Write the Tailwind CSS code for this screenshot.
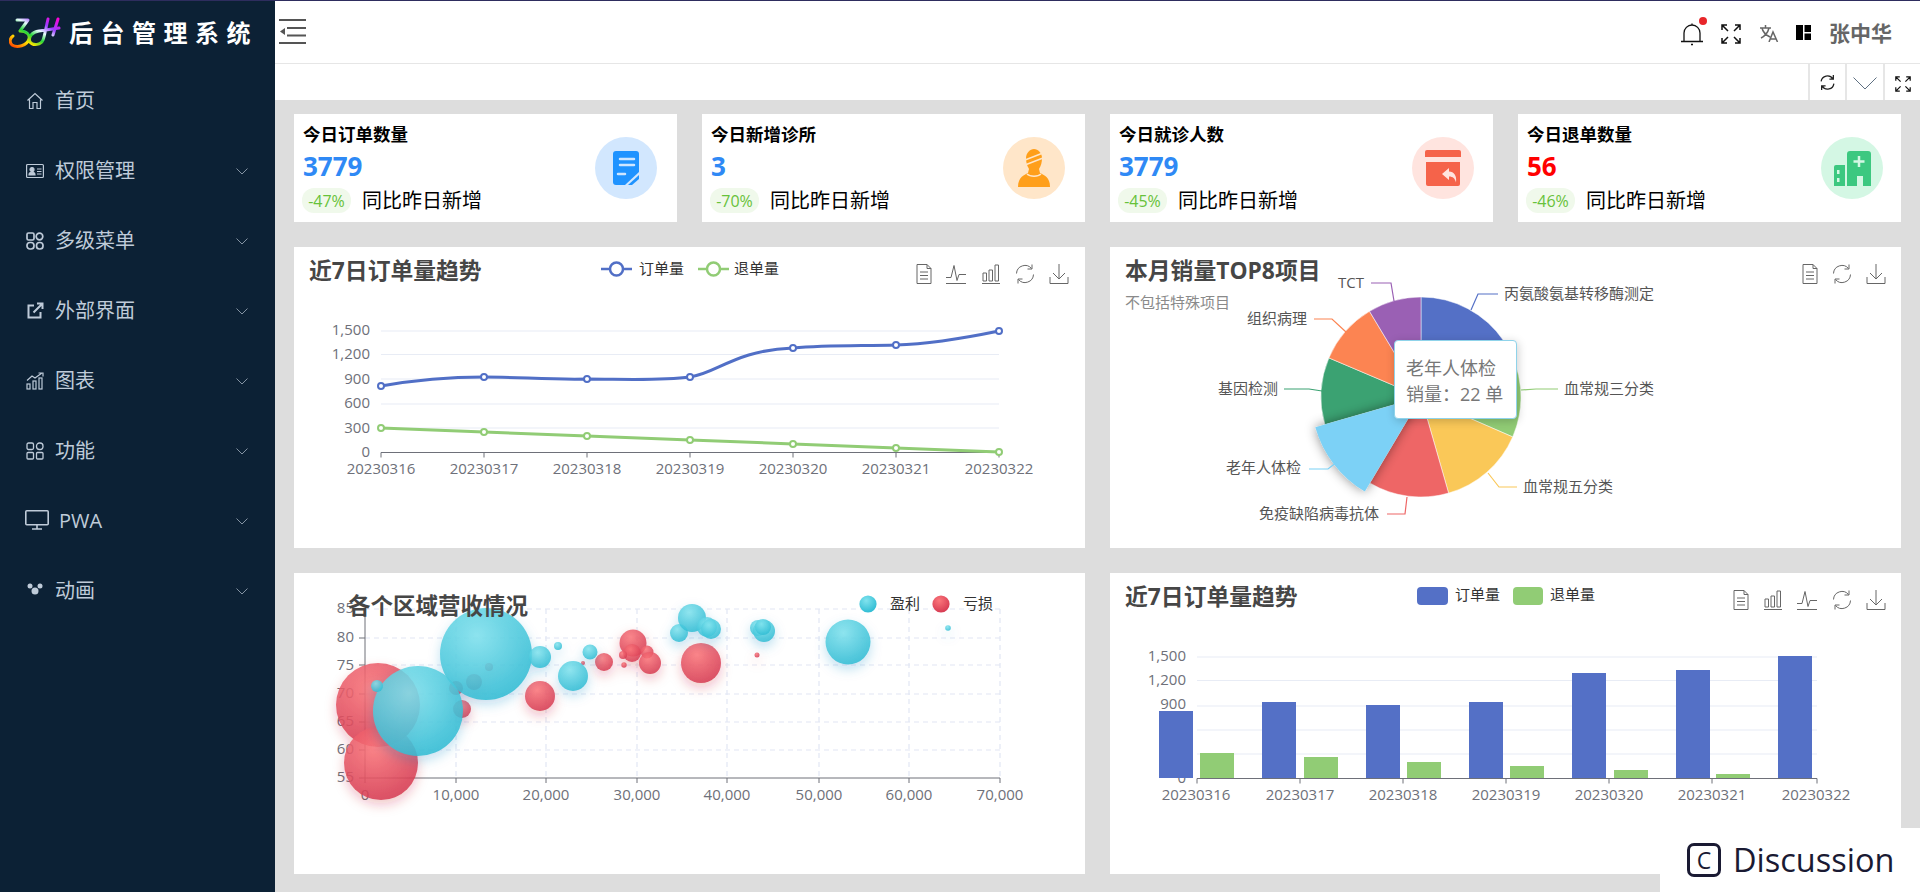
<!DOCTYPE html>
<html lang="zh-CN">
<head>
<meta charset="utf-8">
<title>后台管理系统</title>
<script src="https://cdn.jsdelivr.net/npm/@tailwindcss/browser@4"></script>
</head>
<body class="font-['Open_Sans','Noto_Sans_CJK_SC',sans-serif] overflow-hidden">
<div class="relative w-[1920px] h-[892px] overflow-hidden bg-[#dddddd]">
    <div class="h-px bg-[#2e2d5e]"></div>
    <div class="flex h-[891px]">

        <!-- sidebar -->
        <aside class="w-[275px] shrink-0 bg-[#0c2135] text-[#bfcbd9]">
            <div class="h-[64px] flex items-center pl-[9px]">
                <svg width="52" height="32" viewBox="0 0 52 32" fill="none" class="-mt-[1px]">
                    <defs>
                        <linearGradient id="rainbow" x1="0" y1="1" x2="1" y2="0">
                            <stop offset="0" stop-color="#ff3b00"/>
                            <stop offset=".25" stop-color="#ffe600"/>
                            <stop offset=".42" stop-color="#27d63a"/>
                            <stop offset=".58" stop-color="#e8fbff"/>
                            <stop offset=".75" stop-color="#9b3dff"/>
                            <stop offset="1" stop-color="#ff00d8"/>
                        </linearGradient>
                    </defs>
                    <path d="M8 3H19L11 14C18 14 21 18 20 22C18 29 8 31 3 28C0 25 1 21 4 19M39 2C37 10 36 18 34 23C32 28 24 29 21 25C19 20 23 15 30 14L50 11M49 2L44 18" stroke="url(#rainbow)" stroke-width="3" stroke-linecap="round" stroke-linejoin="round"/>
                </svg>
                <span class="ml-[8px] text-[24px] leading-none font-bold text-white tracking-[7.5px] whitespace-nowrap">后台管理系统</span>
            </div>
            <nav class="text-[20px] pt-px">
                <a class="h-[70px] flex items-center pl-[26px]">
                    <svg class="w-[18px] h-[18px] mr-[11px]" viewBox="0 0 18 18" fill="none" stroke="currentColor" stroke-width="1.2"><path d="M1.5 8.5L9 1.5l7.500 7M3.500 7.500V16.500h3.500V10.500h4V16.500h3.500V7.500"/></svg>
                    <span>首页</span>
                </a>
                <a class="h-[70px] flex items-center pl-[26px]">
                    <svg class="w-[18px] h-[18px] mr-[11px]" viewBox="0 0 18 18" fill="none" stroke="currentColor" stroke-width="1.200"><rect x=".6" y="2.500" width="16.800" height="13" rx="1"/><circle cx="6" cy="7.500" r="2" fill="currentColor"/><path d="M3 13c0-4 6-4 6 0z" fill="currentColor"/><path d="M11 7h4.500M11 9.500h4.500M11 12h4.500"/></svg>
                    <span>权限管理</span>
                    <svg class="ml-auto mr-[27px] w-[12px] h-[7px]" viewBox="0 0 12 7" fill="none" stroke="#8493a3"><path d="M.5.5l5.500 5.500 5.500-5.500"/></svg>
                </a>
                <a class="h-[70px] flex items-center pl-[26px]">
                    <svg class="w-[18px] h-[18px] mr-[11px]" viewBox="0 0 18 18" fill="none" stroke="currentColor" stroke-width="1.700"><rect x="1" y="1" width="7" height="7" rx="1.500"/><circle cx="13.500" cy="4.500" r="3.300"/><rect x="1" y="10.500" width="7" height="6.500" rx="3"/><rect x="10.500" y="10.500" width="6.500" height="6.500" rx="3"/></svg>
                    <span>多级菜单</span>
                    <svg class="ml-auto mr-[27px] w-[12px] h-[7px]" viewBox="0 0 12 7" fill="none" stroke="#8493a3"><path d="M.5.5l5.500 5.500 5.500-5.500"/></svg>
                </a>
                <a class="h-[70px] flex items-center pl-[26px]">
                    <svg class="w-[18px] h-[18px] mr-[11px]" viewBox="0 0 18 18" fill="none" stroke="currentColor" stroke-width="2"><path d="M8 3.500H2.500v12h12V10M7.500 10.500L16 2M11 1.500h5.500V7"/></svg>
                    <span>外部界面</span>
                    <svg class="ml-auto mr-[27px] w-[12px] h-[7px]" viewBox="0 0 12 7" fill="none" stroke="#8493a3"><path d="M.5.5l5.500 5.500 5.500-5.500"/></svg>
                </a>
                <a class="h-[70px] flex items-center pl-[26px]">
                    <svg class="w-[18px] h-[18px] mr-[11px]" viewBox="0 0 18 18" fill="none" stroke="currentColor" stroke-width="1.200"><rect x="1" y="12" width="3" height="5"/><rect x="7" y="9" width="3" height="8"/><rect x="13" y="6" width="3" height="11"/><path d="M1 8.500L6 4l3 2 7-5M12.500 1H17v3.500"/></svg>
                    <span>图表</span>
                    <svg class="ml-auto mr-[27px] w-[12px] h-[7px]" viewBox="0 0 12 7" fill="none" stroke="#8493a3"><path d="M.5.5l5.500 5.500 5.500-5.500"/></svg>
                </a>
                <a class="h-[70px] flex items-center pl-[26px]">
                    <svg class="w-[18px] h-[18px] mr-[11px]" viewBox="0 0 18 18" fill="none" stroke="currentColor" stroke-width="1.300"><rect x="1" y="1" width="6.500" height="6.500" rx="1.500"/><rect x="10.500" y="1" width="6.500" height="6.500" rx="3"/><rect x="1" y="10.500" width="6.500" height="6.500" rx="1"/><rect x="10.500" y="10.500" width="6.500" height="6.500" rx="1"/></svg>
                    <span>功能</span>
                    <svg class="ml-auto mr-[27px] w-[12px] h-[7px]" viewBox="0 0 12 7" fill="none" stroke="#8493a3"><path d="M.5.5l5.500 5.500 5.500-5.500"/></svg>
                </a>
                <a class="h-[70px] flex items-center pl-[25px]">
                    <svg class="w-[24px] h-[20px] mr-[10px] -mt-[3px]" viewBox="0 0 24 20" fill="none" stroke="currentColor" stroke-width="1.600"><rect x=".8" y=".8" width="22.400" height="14" rx="1"/><path d="M12 15v4M7 19h10"/></svg>
                    <span>PWA</span>
                    <svg class="ml-auto mr-[27px] w-[12px] h-[7px]" viewBox="0 0 12 7" fill="none" stroke="#8493a3"><path d="M.5.5l5.500 5.500 5.500-5.500"/></svg>
                </a>
                <a class="h-[70px] flex items-center pl-[26px]">
                    <svg class="w-[18px] h-[18px] mr-[11px] -mt-[2px]" viewBox="0 0 18 18" fill="currentColor"><circle cx="4" cy="5" r="2.500"/><circle cx="14" cy="5" r="2.500"/><circle cx="9" cy="10" r="3.500"/></svg>
                    <span>动画</span>
                    <svg class="ml-auto mr-[27px] w-[12px] h-[7px]" viewBox="0 0 12 7" fill="none" stroke="#8493a3"><path d="M.5.5l5.500 5.500 5.500-5.500"/></svg>
                </a>
            </nav>
        </aside>

        <div class="flex-1 flex flex-col min-w-0">
            <!-- header -->
            <header class="h-[63px] shrink-0 bg-white border-b border-[#e6e6e6] flex items-center">
                <svg class="ml-[4px] w-[27px] h-[25px] -mt-[1px]" viewBox="0 0 27 25" fill="none" stroke="#555" stroke-width="2"><path d="M0 1h27M8 9h19M8 16.500h19M0 24h27"/><path d="M1 12.500l5-3.500v7z" fill="#555" stroke="none"/></svg>
                <div class="ml-auto flex items-center mt-[3px]">
                    <div class="relative w-[24px] h-[24px]">
                        <svg class="w-[24px] h-[24px]" viewBox="0 0 24 24" fill="none" stroke="#111" stroke-width="1.300"><path d="M4 19.500V11a8 8 0 0 1 16 0v8.500M1 19.500h22M12 1.500V3M11 22.500h2"/></svg>
                        <span class="absolute -top-[5px] right-[-3px] w-[8px] h-[8px] rounded-full bg-[#e8262a]"></span>
                    </div>
                    <svg class="ml-[17px] w-[20px] h-[20px]" viewBox="0 0 20 20" fill="none" stroke="#111" stroke-width="1.500"><path d="M1 6V1h5M1 1l6 6M14 1h5v5M19 1l-6 6M1 14v5h5M1 19l6-6M14 19h5v-5M19 19l-6-6"/></svg>
                    <svg class="ml-[19px] w-[19px] h-[17px]" viewBox="0 0 19 17" fill="none" stroke="#666" stroke-width="1.500"><path d="M0 3h11M5.500 0v3M2 3c1 5 4 7 8 9M9 3c-1 4-4 8-8 10M9 17l4-10 4.500 10M10.500 14h5.500"/></svg>
                    <svg class="ml-[17px] w-[15px] h-[15px] -mt-[3px]" viewBox="0 0 15 15" fill="#000"><rect width="7" height="15"/><rect x="8.500" width="6.500" height="7"/><rect x="8.500" y="8.500" width="6.500" height="6.500"/></svg>
                    <span class="ml-[18px] mr-[28px] text-[21px] font-bold text-[#666]">张中华</span>
                </div>
            </header>

            <!-- tag bar -->
            <div class="h-[36px] shrink-0 bg-white flex justify-end">
                <div class="w-[37px] border-l-2 border-[#e6e6e6] flex items-center justify-center">
                    <svg class="w-[17px] h-[17px]" viewBox="0 0 16 16" fill="none" stroke="#222" stroke-width="1.200"><path d="M2 7a6 6 0 0 1 11-2.500M14 9a6 6 0 0 1-11 2.500M13.500 1v3.800H9.800M2.500 15v-3.800h3.700"/></svg>
                </div>
                <div class="w-[38px] border-l-2 border-[#e6e6e6] flex items-center justify-center">
                    <svg class="w-[24px] h-[13px] mt-[3px]" viewBox="0 0 24 13" fill="none" stroke="#5f7082"><path d="M.5.5l11.500 11.500L23.500.5"/></svg>
                </div>
                <div class="w-[37px] border-l-2 border-[#e6e6e6] flex items-center justify-center">
                    <svg class="w-[16px] h-[16px] mt-[3px]" viewBox="0 0 20 20" fill="none" stroke="#111" stroke-width="1.500"><path d="M1 6V1h5M1 1l6 6M14 1h5v5M19 1l-6 6M1 14v5h5M1 19l6-6M14 19h5v-5M19 19l-6-6"/></svg>
                </div>
            </div>

            <!-- content -->
            <main class="flex-1 pl-[19px] pr-[19px] pt-[14px]">
                <section class="grid grid-cols-4 gap-[25px]">
                    <div class="h-[108px] bg-white flex items-center justify-between pl-[9px] pr-[20px]">
                        <div>
                            <div class="text-[17.500px] leading-[22px] font-bold text-black">今日订单数量</div>
                            <div class="mt-[4px] text-[26px] leading-[34px] font-bold text-[#2f89f5]">3779</div>
                            <div class="mt-[5px] flex items-center -ml-px">
                                <span class="w-[49px] h-[25px] rounded-[12px] bg-[#f0f9eb] text-[#67c23a] text-[16px] flex items-center justify-center">-47%</span>
                                <span class="ml-[11px] text-[20px] leading-[25px] text-black">同比昨日新增</span>
                            </div>
                        </div>
                        <div class="w-[62px] h-[62px] rounded-full bg-[#d2e7fe] flex items-center justify-center">
                            <svg class="w-[26px] h-[34px]" viewBox="0 0 26 34"><path d="M3 0h20a3 3 0 0 1 3 3v18L12 34H3a3 3 0 0 1-3-3V3a3 3 0 0 1 3-3z" fill="#1f93ff"/><path d="M26 24v4l-7 6h-4z" fill="#1f93ff"/><path d="M7 8h14M7 14h14M5 23h7" stroke="#cfe6ff" stroke-width="2.500" stroke-linecap="round"/></svg>
                        </div>
                    </div>
                    <div class="h-[108px] bg-white flex items-center justify-between pl-[9px] pr-[20px]">
                        <div>
                            <div class="text-[17.500px] leading-[22px] font-bold text-black">今日新增诊所</div>
                            <div class="mt-[4px] text-[26px] leading-[34px] font-bold text-[#2f89f5]">3</div>
                            <div class="mt-[5px] flex items-center -ml-px">
                                <span class="w-[49px] h-[25px] rounded-[12px] bg-[#f0f9eb] text-[#67c23a] text-[16px] flex items-center justify-center">-70%</span>
                                <span class="ml-[11px] text-[20px] leading-[25px] text-black">同比昨日新增</span>
                            </div>
                        </div>
                        <div class="w-[62px] h-[62px] rounded-full bg-[#ffe6c9] flex items-center justify-center">
                            <svg class="w-[32px] h-[38px]" viewBox="0 0 32 38" fill="#ff9f1a"><path d="M8 9c0-5 4-9 8-9s8 4 8 9c0 4-1 8-3 11h-10c-2-3-3-7-3-11z"/><path d="M11 20h10l1 4c4 2 10 4 10 14H0c0-10 6-12 10-14z"/><path d="M7 11l18-7M7 16l18-7M9 25c3 3 11 3 14 0" fill="none" stroke="#ffe6c9" stroke-width="1.500"/></svg>
                        </div>
                    </div>
                    <div class="h-[108px] bg-white flex items-center justify-between pl-[9px] pr-[19px]">
                        <div>
                            <div class="text-[17.500px] leading-[22px] font-bold text-black">今日就诊人数</div>
                            <div class="mt-[4px] text-[26px] leading-[34px] font-bold text-[#2f89f5]">3779</div>
                            <div class="mt-[5px] flex items-center -ml-px">
                                <span class="w-[49px] h-[25px] rounded-[12px] bg-[#f0f9eb] text-[#67c23a] text-[16px] flex items-center justify-center">-45%</span>
                                <span class="ml-[11px] text-[20px] leading-[25px] text-black">同比昨日新增</span>
                            </div>
                        </div>
                        <div class="w-[62px] h-[62px] rounded-full bg-[#ffe4df] flex items-center justify-center">
                            <svg class="w-[36px] h-[36px]" viewBox="0 0 36 36"><path d="M2 0h32a2 2 0 0 1 2 2v5H0V2a2 2 0 0 1 2-2z" fill="#f5634a"/><path d="M1 12h34v22a2 2 0 0 1-2 2H3a2 2 0 0 1-2-2z" fill="#f5634a"/><path d="M24 18l-7 6 7 6v-3.500c4 0 6 2 7 6 1-7-2-11-7-11z" fill="#ffe4df"/></svg>
                        </div>
                    </div>
                    <div class="h-[108px] bg-white flex items-center justify-between pl-[9px] pr-[18px]">
                        <div>
                            <div class="text-[17.500px] leading-[22px] font-bold text-black">今日退单数量</div>
                            <div class="mt-[4px] text-[26px] leading-[34px] font-bold text-[#ff0000]">56</div>
                            <div class="mt-[5px] flex items-center -ml-px">
                                <span class="w-[49px] h-[25px] rounded-[12px] bg-[#f0f9eb] text-[#67c23a] text-[16px] flex items-center justify-center">-46%</span>
                                <span class="ml-[11px] text-[20px] leading-[25px] text-black">同比昨日新增</span>
                            </div>
                        </div>
                        <div class="w-[62px] h-[62px] rounded-full bg-[#d4f7e4] flex items-center justify-center">
                            <svg class="w-[37px] h-[35px]" viewBox="0 0 37 35" fill="#3cc880"><path d="M0 16a2 2 0 0 1 2-2h9v21H0z"/><path d="M13 3a3 3 0 0 1 3-3h18a3 3 0 0 1 3 3v32h-8V25h-6v10H13z"/><path d="M25 5v11M19.500 10.500h11" stroke="#d4f7e4" stroke-width="2.500"/><path d="M3 19h2.500v4H3zM3 27h2.500v4H3z" fill="#d4f7e4"/></svg>
                        </div>
                    </div>
                </section>

                <svg width="0" height="0" class="absolute">
                    <defs>
                        <symbol id="t-doc" viewBox="0 0 20 20" fill="none" stroke="#666" stroke-width="1"><path d="M3 .5h10l4 4v15H3zM13 .5v4h4M6 8h8M6 11.500h8M6 15h8"/></symbol>
                        <symbol id="t-line" viewBox="0 0 20 20" fill="none" stroke="#666" stroke-width="1"><path d="M0 19.500h20M0 13.500h5l3-12 3 15 2-6h7"/></symbol>
                        <symbol id="t-bar" viewBox="0 0 20 20" fill="none" stroke="#666" stroke-width="1"><path d="M1 19.500h18M2 9h3.500v8H2zM8 6h3.500v11H8zM14 1h3.500v16H14z"/></symbol>
                        <symbol id="t-restore" viewBox="0 0 20 20" fill="none" stroke="#666" stroke-width="1"><path d="M1.500 9.500a8.500 8.500 0 0 1 15-5M18.500 10.500a8.500 8.500 0 0 1-15 5M17 .5v4.500h-4.500M3 19.500v-4.500h4.500"/></symbol>
                        <symbol id="t-save" viewBox="0 0 20 20" fill="none" stroke="#666" stroke-width="1"><path d="M1 13v6.500h18V13M10 0v15M4 9l6 6 6-6"/></symbol>
                        <radialGradient id="cyan" cx=".4" cy=".3" r=".75">
                            <stop offset="0" stop-color="#81e3ee"/>
                            <stop offset="1" stop-color="#2bbad2"/>
                        </radialGradient>
                        <radialGradient id="red" cx=".4" cy=".3" r=".75">
                            <stop offset="0" stop-color="#fb767b"/>
                            <stop offset="1" stop-color="#d4374f"/>
                        </radialGradient>
                        <filter id="sc" x="-40%" y="-40%" width="180%" height="180%"><feDropShadow dx="0" dy="5" stdDeviation="6" flood-color="#1989c8" flood-opacity=".3"/></filter>
                        <filter id="sr" x="-40%" y="-40%" width="180%" height="180%"><feDropShadow dx="0" dy="5" stdDeviation="6" flood-color="#c81932" flood-opacity=".3"/></filter>
                        <filter id="sp" x="-30%" y="-30%" width="160%" height="160%"><feDropShadow dx="0" dy="0" stdDeviation="6" flood-color="#000" flood-opacity=".45"/></filter>
                    </defs>
                </svg>

                <section class="mt-[25px] grid grid-cols-2 gap-[25px]">
                    <!-- line chart -->
                    <div class="h-[301px] bg-white">
                        <svg class="block w-full h-full" viewBox="294 247 791 301" text-anchor="middle" dominant-baseline="central">
                            <text x="309" y="270" text-anchor="start" font-size="22.800" font-weight="700" fill="#464646">近7日订单量趋势</text>
                            <path d="M601 269h31" stroke="#516fc6" stroke-width="2.500"/><circle cx="616.500" cy="269" r="6.500" fill="#fff" stroke="#516fc6" stroke-width="2.500"/>
                            <text x="639" y="268" text-anchor="start" font-size="15" fill="#333">订单量</text>
                            <path d="M698 269h31" stroke="#91cc75" stroke-width="2.500"/><circle cx="713.500" cy="269" r="6.500" fill="#fff" stroke="#91cc75" stroke-width="2.500"/>
                            <text x="734" y="268" text-anchor="start" font-size="15" fill="#333">退单量</text>
                            <use href="#t-doc" x="914" y="264" width="20" height="20"/>
                            <use href="#t-line" x="946" y="264" width="20" height="20"/>
                            <use href="#t-bar" x="981" y="264" width="20" height="20"/>
                            <use href="#t-restore" x="1015" y="264" width="20" height="20"/>
                            <use href="#t-save" x="1049" y="264" width="20" height="20"/>
                            <path d="M381 331H999M381 354.500H999M381 379H999M381 404H999M381 428H999" stroke="#e8ecf5" stroke-width="1.200"/>
                            <path d="M381 452.500H999M381 452.500v5M484 452.500v5M587 452.500v5M690 452.500v5M793 452.500v5M896 452.500v5M999 452.500v5" stroke="#6e7079" stroke-width="1"/>
                            <g font-size="15" fill="#6e7079" text-anchor="end">
                                <text x="370" y="329">1,500</text><text x="370" y="353">1,200</text><text x="370" y="378">900</text><text x="370" y="402">600</text><text x="370" y="427">300</text><text x="370" y="451">0</text>
                            </g>
                            <g font-size="15" fill="#6e7079">
                                <text x="381" y="468">20230316</text><text x="484" y="468">20230317</text><text x="587" y="468">20230318</text><text x="690" y="468">20230319</text><text x="793" y="468">20230320</text><text x="896" y="468">20230321</text><text x="999" y="468">20230322</text>
                            </g>
                            <path d="M381 386C415 380 450 377 484 377C518 377 553 380 587 379C621 379 660 381 690 377C716 374 735 350 793 348C827 345 862 346 896 345C930 344 965 338 999 331" fill="none" stroke="#516fc6" stroke-width="3"/>
                            <path d="M381 428L484 432L587 436L690 440L793 444L896 448L999 452" fill="none" stroke="#91cc75" stroke-width="3"/>
                            <g fill="#fff" stroke="#516fc6" stroke-width="2"><circle cx="381" cy="386" r="3"/><circle cx="484" cy="377" r="3"/><circle cx="587" cy="379" r="3"/><circle cx="690" cy="377" r="3"/><circle cx="793" cy="348" r="3"/><circle cx="896" cy="345" r="3"/><circle cx="999" cy="331" r="3"/></g>
                            <g fill="#fff" stroke="#91cc75" stroke-width="2"><circle cx="381" cy="428" r="3"/><circle cx="484" cy="432" r="3"/><circle cx="587" cy="436" r="3"/><circle cx="690" cy="440" r="3"/><circle cx="793" cy="444" r="3"/><circle cx="896" cy="448" r="3"/><circle cx="999" cy="452" r="3"/></g>
                        </svg>
                    </div>

                    <!-- pie chart -->
                    <div class="relative h-[301px] bg-white">
                        <svg class="block w-full h-full" viewBox="1110 247 791 301" text-anchor="start" dominant-baseline="central">
                            <text x="1125" y="270" font-size="22.800" font-weight="700" fill="#464646">本月销量TOP8项目</text>
                            <text x="1125" y="302" font-size="15" fill="#8a8a8a">不包括特殊项目</text>
                            <use href="#t-doc" x="1800" y="264" width="20" height="20"/>
                            <use href="#t-restore" x="1832" y="264" width="20" height="20"/>
                            <use href="#t-save" x="1866" y="264" width="20" height="20"/>
                            <g stroke="#fff" stroke-width=".5">
                                <path d="M1421 397V297A100 100 0 0 1 1503.900 341.100Z" fill="#5470c6"/>
                                <path d="M1421 397L1503.900 341.100A100 100 0 0 1 1512.700 436.900Z" fill="#91cc75"/>
                                <path d="M1421 397L1512.700 436.900A100 100 0 0 1 1448.600 493.100Z" fill="#fac858"/>
                                <path d="M1421 397L1448.600 493.100A100 100 0 0 1 1369.900 483Z" fill="#ee6666"/>
                                <path d="M1421 397L1324.900 424.600A100 100 0 0 1 1328.900 357.900Z" fill="#3ba272"/>
                                <path d="M1421 397L1328.900 357.900A100 100 0 0 1 1369.500 311.300Z" fill="#fc8452"/>
                                <path d="M1421 397L1369.500 311.300A100 100 0 0 1 1421 297Z" fill="#9a60b4"/>
                            </g>
                            <path d="M1421 397L1364.800 491.600A110 110 0 0 1 1315.300 427.300Z" fill="#7bd1f6" filter="url(#sp)"/>
                            <g fill="none" stroke-width="1.200">
                                <path d="M1471 310L1478 294H1498" stroke="#5470c6"/>
                                <path d="M1371 283H1391L1394 301" stroke="#9a60b4"/>
                                <path d="M1314 319H1332L1346 332" stroke="#fc8452"/>
                                <path d="M1284 389H1309L1322 391" stroke="#3ba272"/>
                                <path d="M1558 389H1536L1521 390" stroke="#91cc75"/>
                                <path d="M1309 469H1328L1337 462" stroke="#7bd1f6"/>
                                <path d="M1387 514H1405L1407 497" stroke="#ee6666"/>
                                <path d="M1517 487H1499L1488 473" stroke="#fac858"/>
                            </g>
                            <g font-size="15" fill="#555">
                                <text x="1504" y="293">丙氨酸氨基转移酶测定</text>
                                <text x="1338" y="282">TCT</text>
                                <text x="1247" y="318">组织病理</text>
                                <text x="1218" y="388">基因检测</text>
                                <text x="1564" y="388">血常规三分类</text>
                                <text x="1226" y="467">老年人体检</text>
                                <text x="1259" y="513">免疫缺陷病毒抗体</text>
                                <text x="1523" y="486">血常规五分类</text>
                            </g>
                        </svg>
                        <div class="absolute left-[284px] top-[93px] w-[123px] h-[79px] bg-white border border-[#8fd3ea] rounded-[4px] shadow-[1px_2px_10px_rgba(0,0,0,0.2)] pl-[11px] pt-[14px] text-[18px] leading-[26px] text-[#777] whitespace-nowrap">
                            <div>老年人体检</div>
                            <div>销量：22 单</div>
                        </div>
                    </div>

                    <!-- bubble chart -->
                    <div class="h-[301px] bg-white">
                        <svg class="block w-full h-full" viewBox="294 573 791 301" text-anchor="middle" dominant-baseline="central">
                            <g stroke="#e2e6f3" stroke-width="1.200" stroke-dasharray="5 4">
                                <path d="M365 609H1000M365 638H1000M365 665H1000M365 694H1000M365 722H1000M365 750H1000"/>
                                <path d="M456 609V778M546 609V778M637 609V778M727 609V778M819 609V778M909 609V778M1000 609V778"/>
                            </g>
                            <path d="M365 609V778H1000M365 609h-6M365 638h-6M365 665h-6M365 694h-6M365 722h-6M365 750h-6M365 778h-6M365 778v5M456 778v5M546 778v5M637 778v5M727 778v5M819 778v5M909 778v5M1000 778v5" fill="none" stroke="#6e7079"/>
                            <g font-size="15" fill="#6e7079" text-anchor="end">
                                <text x="354" y="607">85</text><text x="354" y="636">80</text><text x="354" y="664">75</text><text x="354" y="692">70</text><text x="354" y="720">65</text><text x="354" y="748">60</text><text x="354" y="776">55</text>
                            </g>
                            <g font-size="15" fill="#6e7079">
                                <text x="365" y="794">0</text><text x="456" y="794">10,000</text><text x="546" y="794">20,000</text><text x="637" y="794">30,000</text><text x="727" y="794">40,000</text><text x="819" y="794">50,000</text><text x="909" y="794">60,000</text><text x="1000" y="794">70,000</text>
                            </g>
                            <g fill="url(#red)" filter="url(#sr)" fill-opacity=".85">
                                <circle cx="378" cy="705" r="42"/><circle cx="381" cy="763" r="37"/><circle cx="462" cy="709" r="9"/><circle cx="456" cy="688" r="7"/><circle cx="474" cy="682" r="8"/><circle cx="489" cy="667" r="4"/><circle cx="540" cy="696" r="15"/><circle cx="604" cy="662" r="9"/><circle cx="633" cy="643" r="13.500"/><circle cx="632" cy="653" r="9"/><circle cx="623" cy="655" r="4"/><circle cx="647" cy="652" r="6.500"/><circle cx="650" cy="663" r="11"/><circle cx="624" cy="665" r="2.700"/><circle cx="583" cy="663" r="2"/><circle cx="701" cy="663" r="20"/><circle cx="757" cy="655" r="2.500"/>
                            </g>
                            <g fill="url(#cyan)" filter="url(#sc)" fill-opacity=".85">
                                <circle cx="486" cy="654" r="46"/><circle cx="418" cy="711" r="45"/><circle cx="377" cy="686" r="6"/><circle cx="540" cy="657" r="11"/><circle cx="558" cy="646" r="4"/><circle cx="573" cy="676" r="15"/><circle cx="590" cy="652" r="7.500"/><circle cx="679" cy="633" r="9"/><circle cx="692" cy="618" r="14"/><circle cx="707" cy="627" r="10"/><circle cx="711" cy="629" r="10"/><circle cx="758" cy="628" r="8"/><circle cx="764" cy="631" r="11"/><circle cx="763" cy="627" r="8"/><circle cx="848" cy="642" r="22.500"/><circle cx="948" cy="628" r="2.800"/>
                            </g>
                            <text x="348" y="605" text-anchor="start" font-size="22.500" font-weight="700" fill="#464646">各个区域营收情况</text>
                            <circle cx="868" cy="604" r="8.600" fill="url(#cyan)"/>
                            <text x="890" y="603" text-anchor="start" font-size="15" fill="#333">盈利</text>
                            <circle cx="941" cy="604" r="8.600" fill="url(#red)"/>
                            <text x="963" y="603" text-anchor="start" font-size="15" fill="#333">亏损</text>
                        </svg>
                    </div>

                    <!-- bar chart -->
                    <div class="h-[301px] bg-white">
                        <svg class="block w-full h-full" viewBox="1110 573 791 301" text-anchor="middle" dominant-baseline="central">
                            <text x="1125" y="596" text-anchor="start" font-size="22.800" font-weight="700" fill="#464646">近7日订单量趋势</text>
                            <rect x="1417" y="587" width="31" height="18" rx="4" fill="#5470c6"/>
                            <text x="1455" y="594" text-anchor="start" font-size="15" fill="#333">订单量</text>
                            <rect x="1513" y="587" width="30" height="18" rx="4" fill="#91cc75"/>
                            <text x="1550" y="594" text-anchor="start" font-size="15" fill="#333">退单量</text>
                            <use href="#t-doc" x="1731" y="590" width="20" height="20"/>
                            <use href="#t-bar" x="1763" y="590" width="20" height="20"/>
                            <use href="#t-line" x="1797" y="590" width="20" height="20"/>
                            <use href="#t-restore" x="1832" y="590" width="20" height="20"/>
                            <use href="#t-save" x="1866" y="590" width="20" height="20"/>
                            <path d="M1197 657H1817M1197 680.500H1817M1197 706H1817M1197 730H1817M1197 754H1817" stroke="#e8ecf5" stroke-width="1.200"/>
                            <g font-size="15" fill="#6e7079" text-anchor="end">
                                <text x="1186" y="655">1,500</text><text x="1186" y="679">1,200</text><text x="1186" y="703">900</text><text x="1186" y="728">600</text><text x="1186" y="752">300</text><text x="1186" y="777">0</text>
                            </g>
                            <g fill="#5470c6">
                                <rect x="1159" y="711" width="34" height="67"/><rect x="1262" y="702" width="34" height="76"/><rect x="1366" y="705" width="34" height="73"/><rect x="1469" y="702" width="34" height="76"/><rect x="1572" y="673" width="34" height="105"/><rect x="1676" y="670" width="34" height="108"/><rect x="1778" y="656" width="34" height="122"/>
                            </g>
                            <g fill="#91cc75">
                                <rect x="1200" y="753" width="34" height="25"/><rect x="1304" y="757" width="34" height="21"/><rect x="1407" y="762" width="34" height="16"/><rect x="1510" y="766" width="34" height="12"/><rect x="1614" y="770" width="34" height="8"/><rect x="1716" y="774" width="34" height="4"/>
                            </g>
                            <path d="M1197 778.500H1817M1197 778.500v5M1300 778.500v5M1403 778.500v5M1506 778.500v5M1609 778.500v5M1712 778.500v5M1817 778.500v5" stroke="#6e7079" fill="none"/>
                            <g font-size="15" fill="#6e7079">
                                <text x="1196" y="794">20230316</text><text x="1300" y="794">20230317</text><text x="1403" y="794">20230318</text><text x="1506" y="794">20230319</text><text x="1609" y="794">20230320</text><text x="1712" y="794">20230321</text><text x="1816" y="794">20230322</text>
                            </g>
                        </svg>
                    </div>
                </section>
            </main>
        </div>
    </div>

    <!-- floating discussion widget -->
    <div class="absolute right-0 bottom-0 w-[260px] h-[64px] bg-white flex items-center pl-[27px]">
        <div class="w-[34px] h-[34px] border-[3px] border-[#1a1a33] rounded-[7px] flex items-center justify-center text-[23px] leading-none text-[#1a1a33]">C</div>
        <span class="ml-[12px] text-[32.500px] leading-none text-[#1a1a33]">Discussion</span>
    </div>
</div>
</body>
</html>
